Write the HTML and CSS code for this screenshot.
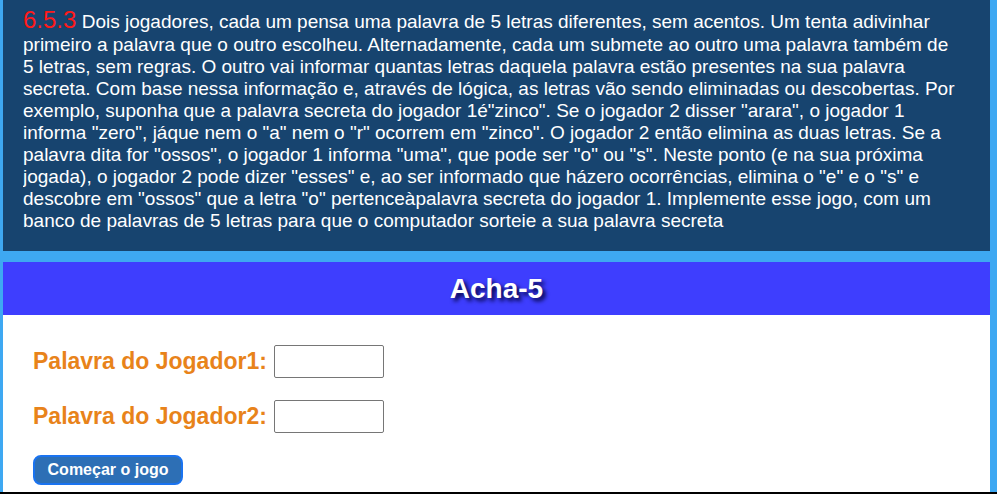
FILE: index.html
```html
<!DOCTYPE html>
<html lang="pt">
<head>
<meta charset="utf-8">
<title>Acha-5</title>
<link rel="stylesheet" href="styles.css">
</head>
<body>
<div class="page">
  <div class="statement">
    <p class="statement-text"><span class="num">6.5.3</span> Dois jogadores, cada um pensa uma palavra de 5 letras diferentes, sem acentos. Um tenta adivinhar<br>primeiro a palavra que o outro escolheu. Alternadamente, cada um submete ao outro uma palavra também de<br>5 letras, sem regras. O outro vai informar quantas letras daquela palavra estão presentes na sua palavra<br>secreta. Com base nessa informação e, através de lógica, as letras vão sendo eliminadas ou descobertas. Por<br>exemplo, suponha que a palavra secreta do jogador 1é"zinco". Se o jogador 2 disser "arara", o jogador 1<br>informa "zero", jáque nem o "a" nem o "r" ocorrem em "zinco". O jogador 2 então elimina as duas letras. Se a<br>palavra dita for "ossos", o jogador 1 informa "uma", que pode ser "o" ou "s". Neste ponto (e na sua próxima<br>jogada), o jogador 2 pode dizer "esses" e, ao ser informado que házero ocorrências, elimina o "e" e o "s" e<br>descobre em "ossos" que a letra "o" pertenceàpalavra secreta do jogador 1. Implemente esse jogo, com um<br>banco de palavras de 5 letras para que o computador sorteie a sua palavra secreta</p>
  </div>
  <div class="game">
    <h1 class="game-title">Acha-5</h1>
    <div class="game-body">
      <div class="field">
        <label class="field-label" for="p1">Palavra do Jogador1:</label>
        <input class="field-input" id="p1" type="text">
      </div>
      <div class="field">
        <label class="field-label" for="p2">Palavra do Jogador2:</label>
        <input class="field-input" id="p2" type="text">
      </div>
      <button class="start-btn" type="button">Começar o jogo</button>
    </div>
  </div>
</div>
<div class="footer-line"></div>
</body>
</html>
```
FILE: styles.css
```css
html, body {
  margin: 0;
  padding: 0;
}
body {
  background: #3ea8f2;
  font-family: "Liberation Sans", Arial, sans-serif;
  height: 494px;
  overflow: hidden;
  display: flex;
  flex-direction: column;
}
.page {
  margin: 0 7px 0 3px;
  display: flex;
  flex-direction: column;
  gap: 11px;
  height: 492px;
}
.statement {
  background: #17446f;
  padding: 6px 4px 19px 20px;
}
.statement-text {
  margin: 0;
  color: #ffffff;
  font-size: 19px;
  line-height: normal;
  white-space: nowrap;
  overflow: hidden;
}
.num {
  color: #ff1a1a;
  font-size: 24px;
  line-height: normal;
}
.game {
  flex: 1;
  display: flex;
  flex-direction: column;
  background: #ffffff;
}
.game-title {
  margin: 0;
  height: 53px;
  flex: none;
  background: #3e3efe;
  color: #ffffff;
  font-size: 28px;
  font-weight: bold;
  display: flex;
  align-items: center;
  justify-content: center;
  text-shadow: 3px 3px 4px #00003a;
}
.game-body {
  padding: 30px 30px 0 30px;
  display: flex;
  flex-direction: column;
  align-items: flex-start;
  gap: 22px;
}
.field {
  display: flex;
  align-items: center;
  gap: 7px;
}
.field-label {
  color: #e8831a;
  font-size: 23px;
  font-weight: bold;
}
.field-input {
  width: 110px;
  height: 33px;
  box-sizing: border-box;
  border: 1px solid #767676;
  border-radius: 2px;
  margin: 0;
  padding: 2px 4px;
  font-size: 16px;
}
.start-btn {
  width: 150px;
  height: 30px;
  box-sizing: border-box;
  background: #2d6fb5;
  border: 2px solid #1a73f0;
  border-radius: 8px;
  color: #ffffff;
  font-family: "Liberation Sans", Arial, sans-serif;
  font-size: 16px;
  font-weight: bold;
  padding: 0;
}
.footer-line {
  height: 2px;
  background: #000000;
}
```
